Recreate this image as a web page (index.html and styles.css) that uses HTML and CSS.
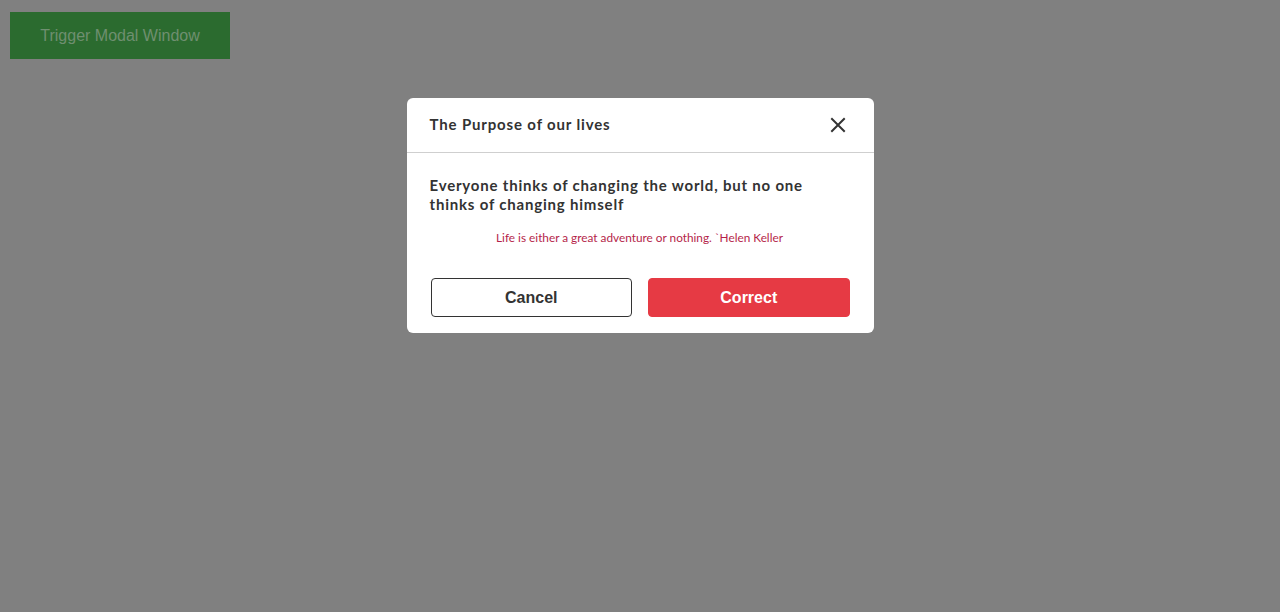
FILE: index.html
```html
<!DOCTYPE html>
<html>
<head>
<meta charset="utf-8">
<link rel="stylesheet" href="styles.css">
</head>
<body>
<button class="trigger">Trigger Modal Window</button>
<div class="overlay">
  <div class="modal">
    <div class="modal-header">
      <h2 class="modal-title">The Purpose of our lives</h2>
      <button class="close" aria-label="Close">
        <svg width="16" height="16" viewBox="0 0 16 16"><path d="M2 2 L14 14 M14 2 L2 14" stroke="#333" stroke-width="2" stroke-linecap="square" fill="none"/></svg>
      </button>
    </div>
    <div class="modal-body">
      <p class="lead">Everyone thinks of changing the world, but no one thinks of changing himself</p>
      <p class="quote">Life is either a great adventure or nothing. `Helen Keller</p>
      <div class="actions">
        <button class="btn btn-cancel">Cancel</button>
        <button class="btn btn-correct">Correct</button>
      </div>
    </div>
  </div>
</div>
</body>
</html>
```

FILE: styles.css
```css
html, body {
  margin: 0;
  padding: 0;
  height: 100%;
}
body {
  background: #808080;
  font-family: "Liberation Sans", Arial, sans-serif;
  padding: 12px 10px;
  box-sizing: border-box;
}
.trigger {
  display: block;
  width: 220px;
  height: 47px;
  background: #2b6b2f;
  color: #6f8f70;
  border: none;
  font-family: "Liberation Sans", Arial, sans-serif;
  font-size: 16px;
  padding: 0;
}
.overlay {
  position: fixed;
  inset: 0;
  display: flex;
  justify-content: center;
  align-items: flex-start;
  padding-top: 98px;
}
.modal {
  width: 467px;
  background: #fff;
  border-radius: 6px;
  font-family: Lato, "Open Sans", sans-serif;
  color: #333;
}
.modal-header {
  display: flex;
  align-items: center;
  justify-content: space-between;
  height: 54px;
  padding: 0 24px 0 23px;
  border-bottom: 1px solid #cfcfcf;
}
.modal-title {
  margin: 0;
  font-size: 15px;
  font-weight: 700;
  color: #333;
  letter-spacing: 0.85px;
  margin-top: -3px;
}
.close {
  background: none;
  border: none;
  padding: 0;
  width: 18px;
  height: 18px;
  display: flex;
  align-items: center;
  justify-content: center;
  margin-right: 3px;
}
.modal-body {
  padding: 23px 24px 16px 23px;
}
.lead {
  margin: 0;
  font-size: 15px;
  font-weight: 700;
  line-height: 19px;
  color: #333;
  letter-spacing: 0.8px;
}
.quote {
  margin: 16px 0 0;
  text-align: center;
  font-size: 11.8px;
  color: #b51f4a;
  line-height: 16px;
}
.actions {
  display: flex;
  gap: 16px;
  margin-top: 32px;
  padding-left: 1px;
}
.btn {
  flex: 1;
  height: 39px;
  border-radius: 4px;
  font-family: "Liberation Sans", Arial, sans-serif;
  font-size: 16px;
  font-weight: 700;
  padding: 0;
}
.btn-cancel {
  background: #fff;
  border: 1px solid #333;
  color: #333;
}
.btn-correct {
  background: #e63a44;
  border: 1px solid #e63a44;
  color: #fff;
}
```
